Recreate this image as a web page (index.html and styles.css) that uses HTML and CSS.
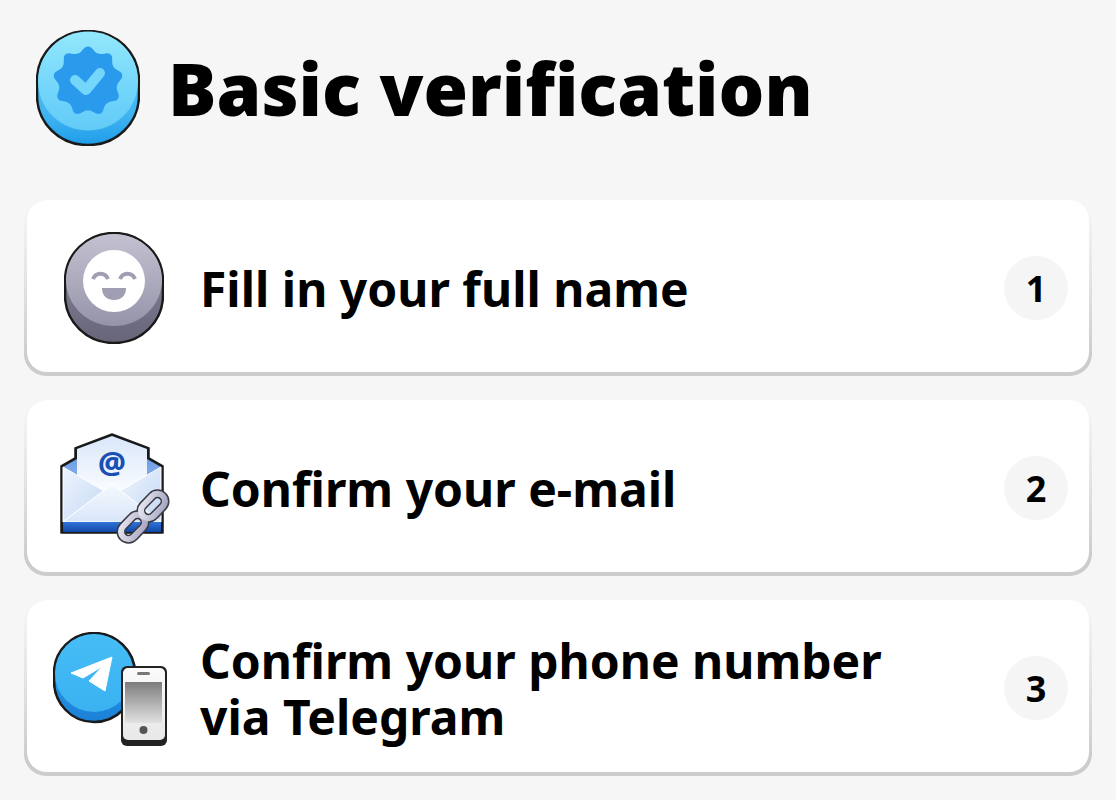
FILE: index.html
```html
<!DOCTYPE html>
<html lang="en">
<head>
<meta charset="utf-8">
<title>Basic verification</title>
<link rel="stylesheet" href="styles.css">
</head>
<body>
<svg class="defs" width="0" height="0" aria-hidden="true">
  <defs>
    <linearGradient id="blueTop" x1="0" y1="0" x2="0" y2="1"><stop offset="0" stop-color="#93e8fc"/><stop offset=".6" stop-color="#72d5fb"/><stop offset="1" stop-color="#62cbf7"/></linearGradient>
    <linearGradient id="blueSide" x1="0" y1="0" x2="0" y2="1"><stop offset="0" stop-color="#5cc8f6"/><stop offset=".75" stop-color="#3fb3f1"/><stop offset="1" stop-color="#1f9ce9"/></linearGradient>
    <linearGradient id="greyTop" x1="0" y1="0" x2="0" y2="1"><stop offset="0" stop-color="#c4c1d1"/><stop offset="1" stop-color="#9694a9"/></linearGradient>
    <linearGradient id="greySide" x1="0" y1="0" x2="0" y2="1"><stop offset="0" stop-color="#8f8ca0"/><stop offset="1" stop-color="#67657a"/></linearGradient>
    <linearGradient id="paper" x1="0" y1="0" x2="0" y2="1"><stop offset="0" stop-color="#d9e7fa"/><stop offset="1" stop-color="#ffffff"/></linearGradient>
    <linearGradient id="envBack" x1="0" y1="0" x2="0" y2="1"><stop offset="0" stop-color="#6f9fe6"/><stop offset="1" stop-color="#b6d2f5"/></linearGradient>
    <linearGradient id="envLeft" x1="0" y1="0" x2="1" y2="1"><stop offset="0" stop-color="#eef4fd"/><stop offset="1" stop-color="#c5d9f5"/></linearGradient>
    <linearGradient id="envFlap" x1="0" y1="0" x2="0" y2="1"><stop offset="0" stop-color="#f6f9fe"/><stop offset="1" stop-color="#d8e6f9"/></linearGradient>
    <linearGradient id="envBase" x1="0" y1="0" x2="0" y2="1"><stop offset="0" stop-color="#2f74d8"/><stop offset="1" stop-color="#1148a8"/></linearGradient>
    <linearGradient id="chain" x1="0" y1="0" x2="1" y2="1"><stop offset="0" stop-color="#e6e6f0"/><stop offset="1" stop-color="#a6a6c2"/></linearGradient>
    <linearGradient id="tgTop" x1="0" y1="0" x2="0" y2="1"><stop offset="0" stop-color="#46bdf5"/><stop offset="1" stop-color="#3ab2f2"/></linearGradient>
    <linearGradient id="tgSide" x1="0" y1="0" x2="0" y2="1"><stop offset="0" stop-color="#36a9ee"/><stop offset="1" stop-color="#1a80d6"/></linearGradient>
    <linearGradient id="phoneBody" x1="0" y1="0" x2="0" y2="1"><stop offset="0" stop-color="#fbfbfb"/><stop offset="1" stop-color="#e8e8e8"/></linearGradient>
    <linearGradient id="phoneScreen" x1="0" y1="0" x2="0" y2="1"><stop offset="0" stop-color="#7c7c7c"/><stop offset="1" stop-color="#e2e2e2"/></linearGradient>
  </defs>
</svg>
<main class="page">
  <header class="head">
    <svg class="head-icon" viewBox="0 0 104 116" aria-hidden="true">
      <path d="M1 51C1 23 23 1 52 1s51 22 51 50v14c0 28-22 50-51 50S1 93 1 65Z" fill="url(#blueSide)" stroke="#1a1a1a" stroke-width="2.500"/>
      <ellipse cx="52" cy="51" rx="50" ry="49.500" fill="url(#blueTop)"/>
      <g transform="translate(52 51)">
        <path d="M-4.500-30.700Q0-37 4.500-30.700Q8.900-24.400 16.400-26.400Q23.800-28.300 23.200-20.700Q22.500-13 29.500-9.700Q36.400-6.400 31-1Q25.600 4.500 28.800 11.500Q32 18.500 24.400 19.200Q16.700 19.900 14.700 27.400Q12.700 34.800 6.400 30.400Q0 26-6.400 30.400Q-12.700 34.800-14.700 27.400Q-16.700 19.900-24.400 19.200Q-32 18.500-28.800 11.500Q-25.600 4.500-31-1Q-36.400-6.400-29.500-9.700Q-22.500-13-23.200-20.700Q-23.800-28.300-16.400-26.400Q-8.900-24.400-4.500-30.700Z" fill="#2a9bec" stroke="#2a9bec" stroke-width="2" stroke-linejoin="round"/>
        <path d="M-13-1l11 10 14-17" fill="none" stroke="#74d6fb" stroke-width="10" stroke-linecap="round" stroke-linejoin="round"/>
      </g>
    </svg>
    <h1 class="title">Basic verification</h1>
  </header>
  <ul class="steps">
    <li class="step">
      <div class="step-inner">
        <div class="step-icon">
          <svg class="i-face" viewBox="0 0 100 112" aria-hidden="true">
            <path d="M1 49C1 22 23 1 50 1s49 21 49 48v14c0 27-22 48-49 48S1 90 1 63Z" fill="url(#greySide)" stroke="#1a1a1a" stroke-width="2.500"/>
            <ellipse cx="50" cy="48" rx="48" ry="46" fill="url(#greyTop)"/>
            <circle cx="50" cy="49" r="31" fill="#fff"/>
            <path d="M29 47a8 8 0 0 1 15 0M56 47a8 8 0 0 1 15 0" fill="none" stroke="#a09eb2" stroke-width="4"/>
            <path d="M38 56h24c0 8-5 12-12 12s-12-4-12-12Z" fill="#a09eb2"/>
          </svg>
        </div>
        <span class="step-text">Fill in your full name</span>
        <span class="step-num">1</span>
      </div>
    </li>
    <li class="step">
      <div class="step-inner">
        <div class="step-icon">
          <svg class="i-mail" viewBox="0 0 110 114" aria-hidden="true">
            <path d="M1 33L15 25V15L52 1l37 14V25l14 8v67H1Z" fill="#1a1a1a" stroke="#1a1a1a" stroke-width="1.500" stroke-linejoin="round"/>
            <path d="M3 34L17 26H87L101 34V89H3Z" fill="url(#envBack)"/>
            <path d="M17 16L52 3l35 13v50H17Z" fill="url(#paper)"/>
            <text class="at" x="52" y="41">@</text>
            <path d="M3 34l41 24L3 89Z" fill="url(#envLeft)" stroke="#fff" stroke-width="1"/>
            <path d="M101 34L60 58l41 31Z" fill="url(#envLeft)" stroke="#fff" stroke-width="1"/>
            <path d="M3 89l49-38 49 38Z" fill="url(#envFlap)" stroke="#fff" stroke-width="1"/>
            <path d="M3 89h98v9a1 1 0 0 1-1 1H4a1 1 0 0 1-1-1Z" fill="url(#envBase)"/>
            <g fill="none">
              <rect x="59" y="86.500" width="28" height="15" rx="7.500" transform="rotate(-46 73 94)" stroke="#3a3a44" stroke-width="9"/>
              <rect x="79" y="65.500" width="28" height="15" rx="7.500" transform="rotate(-46 93 73)" stroke="#3a3a44" stroke-width="9"/>
              <rect x="59" y="86.500" width="28" height="15" rx="7.500" transform="rotate(-46 73 94)" stroke="url(#chain)" stroke-width="6"/>
              <rect x="79" y="65.500" width="28" height="15" rx="7.500" transform="rotate(-46 93 73)" stroke="url(#chain)" stroke-width="6"/>
            </g>
          </svg>
        </div>
        <span class="step-text">Confirm your e-mail</span>
        <span class="step-num">2</span>
      </div>
    </li>
    <li class="step">
      <div class="step-inner">
        <div class="step-icon">
          <svg class="i-tg" viewBox="0 0 116 116" aria-hidden="true">
            <path d="M1 41C1 19 19 1 41 1s41 18 41 40v8c0 22-18 41-41 41S1 71 1 49Z" fill="url(#tgSide)" stroke="#1a1a1a" stroke-width="2.500"/>
            <circle cx="41" cy="41" r="39" fill="url(#tgTop)"/>
            <path d="M18 41L59 25 52 59 36 49 50 34 30 46Z" fill="#fff" stroke="#fff" stroke-width="1" stroke-linejoin="round"/>
            <rect x="68" y="34" width="46" height="80" rx="6" fill="#222"/>
            <rect x="70" y="36" width="42" height="72" rx="5" fill="url(#phoneBody)"/>
            <rect x="84" y="40" width="13" height="3" rx="1.500" fill="#777"/>
            <rect x="72" y="50" width="37" height="41" fill="url(#phoneScreen)"/>
            <circle cx="90.500" cy="98" r="4" fill="#555"/>
          </svg>
        </div>
        <span class="step-text">Confirm your phone number<br>via Telegram</span>
        <span class="step-num">3</span>
      </div>
    </li>
  </ul>
</main>
</body>
</html>
```
FILE: styles.css
```css
* { box-sizing: border-box; }
html, body { margin: 0; padding: 0; }
body {
  width: 1116px;
  height: 800px;
  overflow: hidden;
  background: #f6f6f6;
  color: #000;
  font-family: "Noto Sans", "Open Sans", sans-serif;
}
.defs { display: block; height: 0; }
.page { padding: 30px 24px 0; }
.head {
  display: flex;
  align-items: center;
  gap: 28px;
  height: 116px;
  padding-left: 12px;
}
.head-icon { width: 104px; height: 116px; flex: none; }
.title {
  margin: 0;
  font-size: 72px;
  font-weight: 900;
  line-height: 1;
}
.steps {
  list-style: none;
  margin: 54px 0 0;
  padding: 0;
  display: flex;
  flex-direction: column;
  gap: 24px;
}
.step {
  height: 176px;
  padding: 0 3px 4px;
  border-radius: 22px;
  background: linear-gradient(180deg, #f7f7f7 0%, #e6e6e6 40%, #cccccc 90%);
}
.step-inner {
  height: 100%;
  display: flex;
  align-items: center;
  background: #fff;
  border-radius: 20px;
  padding: 4px 21px 0 0;
}
.step-icon {
  width: 173px;
  flex: none;
  display: flex;
  justify-content: center;
}
.i-face { width: 100px; height: 112px; }
.i-mail { width: 110px; height: 114px; margin: 4px 0 0 3px; }
.i-tg { width: 116px; height: 116px; margin: 4px 0 0 -6px; }
.at {
  font-family: "Noto Sans", sans-serif;
  font-size: 31px;
  font-weight: 800;
  fill: #1a4fb5;
  text-anchor: middle;
}
.step-text {
  flex: 1;
  font-size: 48px;
  font-weight: 700;
  line-height: 56px;
  padding-top: 2px;
}
.step-num {
  width: 64px;
  height: 64px;
  flex: none;
  border-radius: 50%;
  background: #f5f5f5;
  display: flex;
  align-items: center;
  justify-content: center;
  font-size: 36px;
  font-weight: 700;
}
```
